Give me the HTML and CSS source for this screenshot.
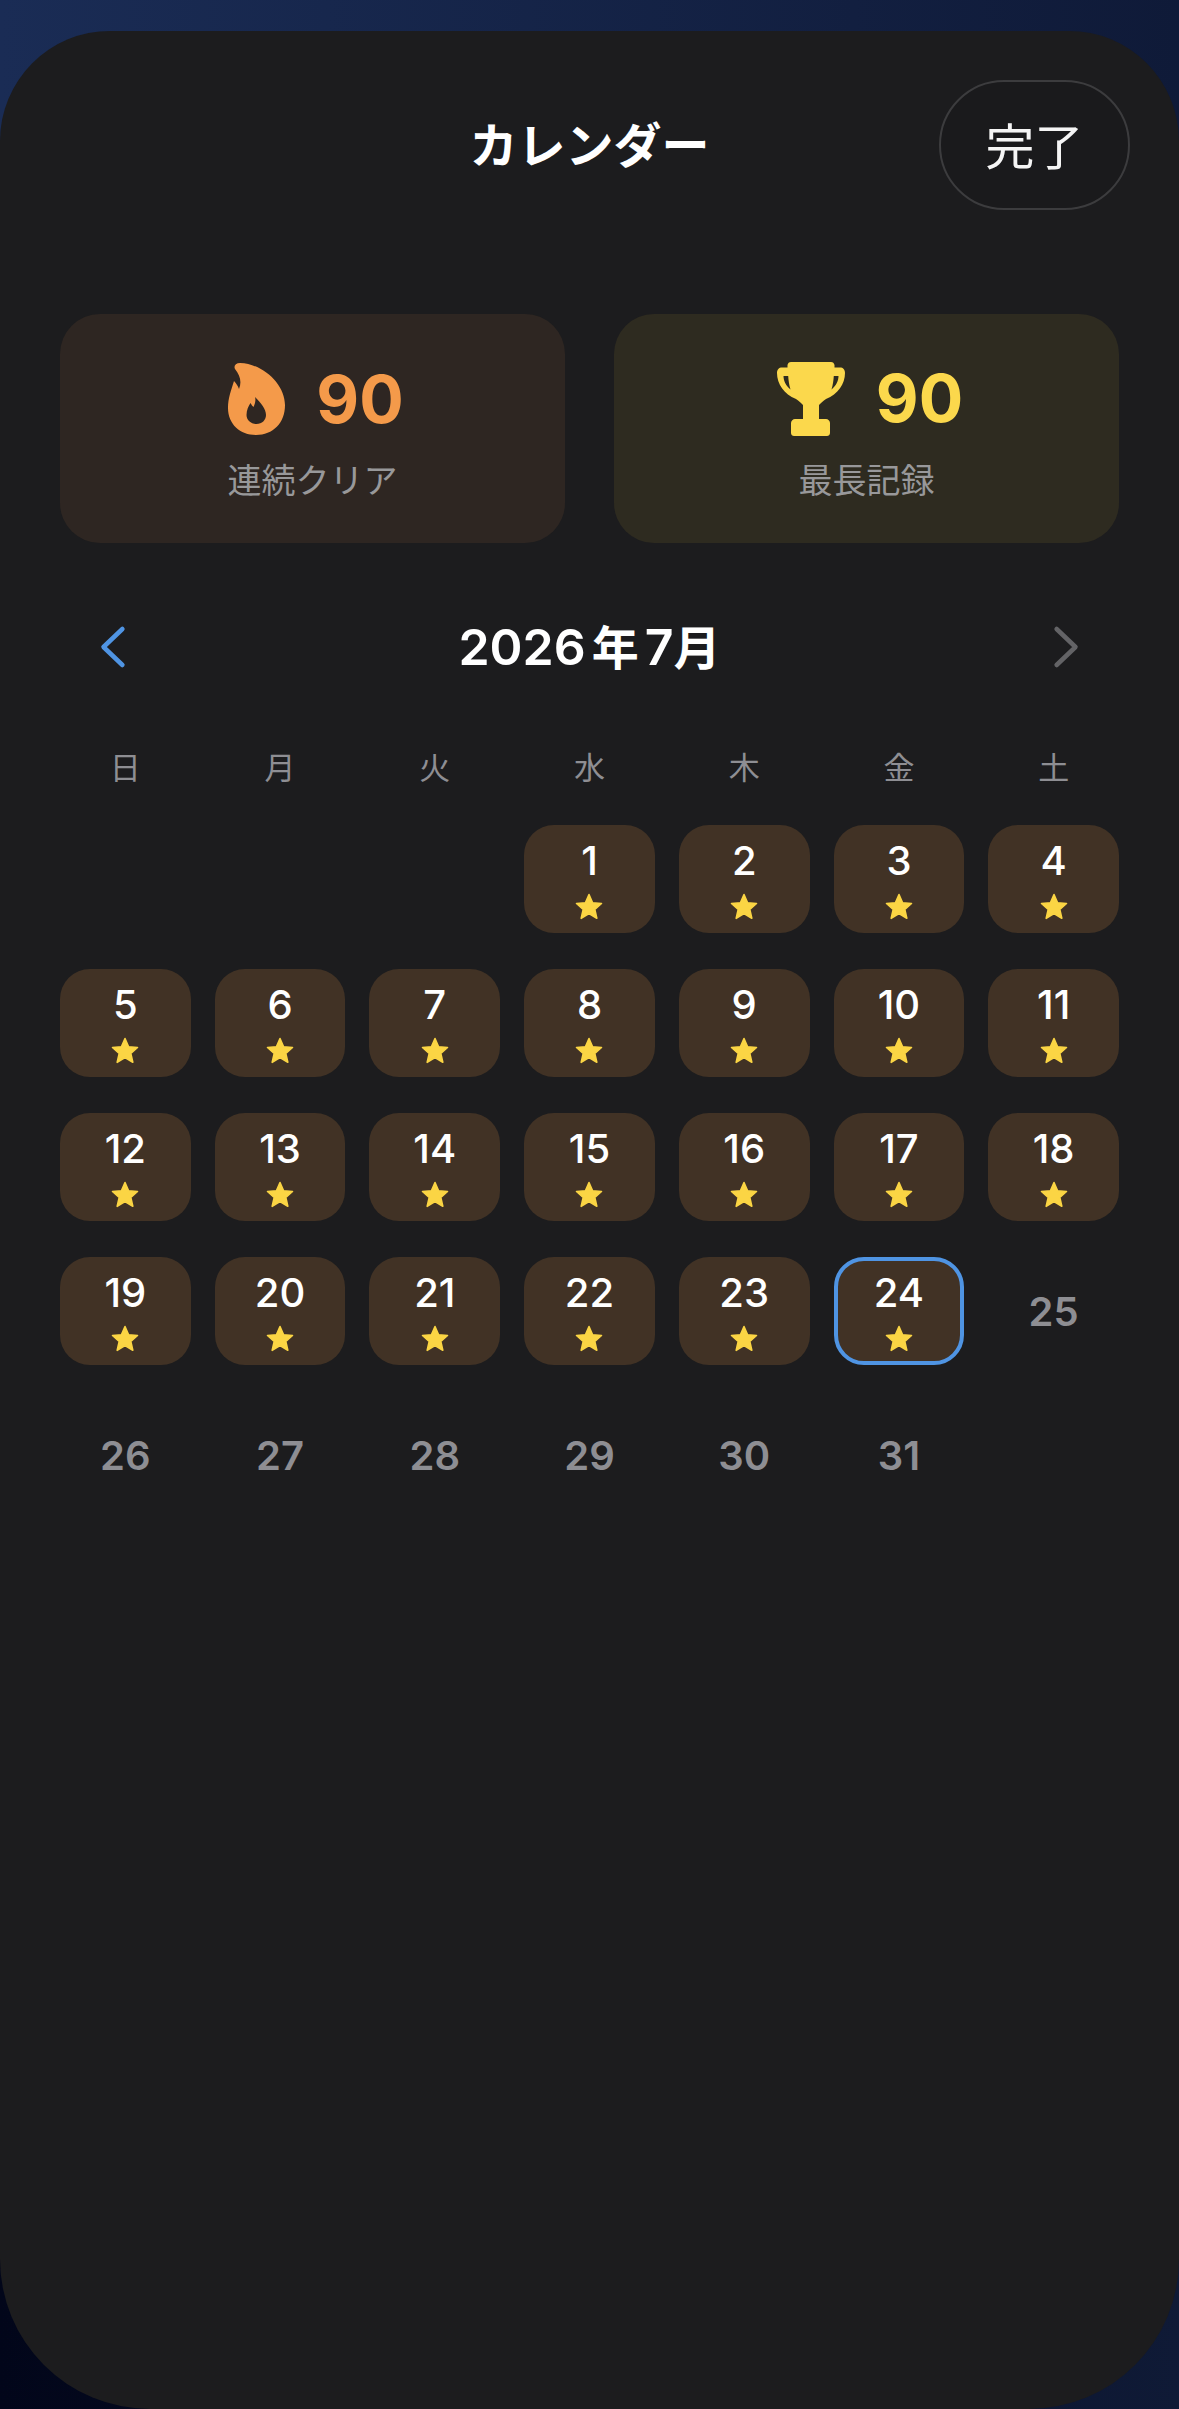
FILE: index.html
```html
<!DOCTYPE html>
<html lang="ja">
<head>
    <meta charset="UTF-8">
    <meta name="viewport" content="width=device-width, initial-scale=1.0">
    <title>カレンダー</title>
    <link rel="stylesheet" href="styles.css">
</head>
<body>
    <svg class="defs" width="0" height="0">
        <symbol id="star" viewBox="0 0 28 27">
            <polygon points="14,1.500 17.600,9.700 26.500,10.500 19.800,16.400 21.800,25.300 14,20.600 6.200,25.300 8.200,16.400 1.500,10.500 10.400,9.700" fill="#fbd544" stroke="#fbd544" stroke-width="1.600" stroke-linejoin="round"/>
        </symbol>
    </svg>

    <div class="sheet">
        <!-- HEADER -->
        <header class="header">
            <div></div>
            <h1 class="title">カレンダー</h1>
            <button class="done">完了</button>
        </header>

        <!-- STATS -->
        <section class="stats">
            <div class="stat stat-streak">
                <div class="stat-top">
                    <svg class="flame" viewBox="0 0 57 72">
                        <path fill-rule="evenodd" fill="#f49a4a" d="M7 6C5.5 3 7.5 0 12 0C36 1 57 22 57 42C57 60 45 72 28 72C12 72 0 61 0 45C0 35 3 28 6 18C8 20 10 23 11 26C14 19 12 12 7 6ZM27 34C33 40 38 46 38 52C38 57 34 61 28.5 61C23 61 18.5 57 18.5 52C18.5 47 20.5 43 22.5 40C23.5 42 24.5 43 25.5 44C27 41 28 37 27 34Z"/>
                    </svg>
                    <span class="stat-num">90</span>
                </div>
                <div class="stat-label">連続クリア</div>
            </div>
            <div class="stat stat-best">
                <div class="stat-top">
                    <svg class="trophy" viewBox="0 0 68 74">
                        <path fill-rule="evenodd" fill="#fbd84c" d="M14 0H54C56 0 57 1 57.5 3V5.5H63C66 5.5 68 7.5 68 11C68 22 61 32 49 37C46 39 44 41 42 43V57H49C51 57 53 59 53 61V71C53 73 51.5 74 50 74H17C15.500 74 14 73 14 71V61C14 59 16 57 18 57H26V43C24 41 22 39 19 37C7 32 0 22 0 11C0 7.5 2 5.5 5 5.500H10.500V3C11 1 12 0 14 0ZM6.500 14C6.500 19 9 24 13.500 27.500C12 23 11.500 18 11.200 14ZM61.500 14C61.500 19 59 24 54.500 27.500C56 23 56.500 18 56.800 14Z"/>
                    </svg>
                    <span class="stat-num">90</span>
                </div>
                <div class="stat-label">最長記録</div>
            </div>
        </section>

        <!-- MONTH NAV -->
        <nav class="month-nav">
            <svg class="chev chev-prev" viewBox="0 0 30 48"><polyline points="26,4 5,24 26,44"/></svg>
            <h2 class="month">2026<span class="kanji kanji-gap">年</span>7<span class="kanji">月</span></h2>
            <svg class="chev chev-next" viewBox="0 0 30 48"><polyline points="4,4 25,24 4,44"/></svg>
        </nav>

        <!-- WEEKDAYS -->
        <div class="weekdays">
            <div>日</div><div>月</div><div>火</div><div>水</div><div>木</div><div>金</div><div>土</div>
        </div>

        <!-- DAYS -->
        <div class="days">
            <div></div>
            <div></div>
            <div></div>
            <div class="day done-day"><span>1</span><svg class="star"><use href="#star"/></svg></div>
            <div class="day done-day"><span>2</span><svg class="star"><use href="#star"/></svg></div>
            <div class="day done-day"><span>3</span><svg class="star"><use href="#star"/></svg></div>
            <div class="day done-day"><span>4</span><svg class="star"><use href="#star"/></svg></div>
            <div class="day done-day"><span>5</span><svg class="star"><use href="#star"/></svg></div>
            <div class="day done-day"><span>6</span><svg class="star"><use href="#star"/></svg></div>
            <div class="day done-day"><span>7</span><svg class="star"><use href="#star"/></svg></div>
            <div class="day done-day"><span>8</span><svg class="star"><use href="#star"/></svg></div>
            <div class="day done-day"><span>9</span><svg class="star"><use href="#star"/></svg></div>
            <div class="day done-day"><span>10</span><svg class="star"><use href="#star"/></svg></div>
            <div class="day done-day"><span>11</span><svg class="star"><use href="#star"/></svg></div>
            <div class="day done-day"><span>12</span><svg class="star"><use href="#star"/></svg></div>
            <div class="day done-day"><span>13</span><svg class="star"><use href="#star"/></svg></div>
            <div class="day done-day"><span>14</span><svg class="star"><use href="#star"/></svg></div>
            <div class="day done-day"><span>15</span><svg class="star"><use href="#star"/></svg></div>
            <div class="day done-day"><span>16</span><svg class="star"><use href="#star"/></svg></div>
            <div class="day done-day"><span>17</span><svg class="star"><use href="#star"/></svg></div>
            <div class="day done-day"><span>18</span><svg class="star"><use href="#star"/></svg></div>
            <div class="day done-day"><span>19</span><svg class="star"><use href="#star"/></svg></div>
            <div class="day done-day"><span>20</span><svg class="star"><use href="#star"/></svg></div>
            <div class="day done-day"><span>21</span><svg class="star"><use href="#star"/></svg></div>
            <div class="day done-day"><span>22</span><svg class="star"><use href="#star"/></svg></div>
            <div class="day done-day"><span>23</span><svg class="star"><use href="#star"/></svg></div>
            <div class="day done-day today"><span>24</span><svg class="star"><use href="#star"/></svg></div>
            <div class="day">25</div>
            <div class="day">26</div>
            <div class="day">27</div>
            <div class="day">28</div>
            <div class="day">29</div>
            <div class="day">30</div>
            <div class="day">31</div>
        </div>
    </div>
</body>
</html>
```

FILE: styles.css
```css
html, body {
    margin: 0;
    height: 100%;
}
body {
    font-family: Inter, "Noto Sans CJK JP", sans-serif;
    color: #fff;
    background-color: #0f1a37;
    background-image: linear-gradient(to right, #1a2c55, #0f1a38), linear-gradient(to right, #02061a, #0f1a36);
    background-size: 100% 50%;
    background-position: top, bottom;
    background-repeat: no-repeat;
    overflow: hidden;
}
.defs {
    position: absolute;
}
.sheet {
    box-sizing: border-box;
    height: 2378px;
    margin-top: 31px;
    padding: 49px 60px 0;
    background-color: #1c1c1e;
    border-radius: 110px 110px 150px 150px;
}

.header {
    display: grid;
    grid-template-columns: 1fr auto 1fr;
    align-items: center;
}
.title {
    margin: 0 0 6px;
    font-size: 48px;
    font-weight: 700;
}
.done {
    justify-self: end;
    width: 191px;
    height: 130px;
    margin-right: -11px;
    border: 2px solid #3c3c3e;
    border-radius: 65px;
    background-color: #1a1a1c;
    color: #f5f5f5;
    font-family: inherit;
    font-size: 49px;
    padding: 0 0 4px;
}

.stats {
    display: grid;
    grid-template-columns: 1fr 1fr;
    gap: 49px;
    margin-top: 104px;
}
.stat {
    box-sizing: border-box;
    height: 229px;
    padding-top: 47px;
    border-radius: 40px;
    text-align: center;
}
.stat-streak {
    background-color: #2e2622;
    color: #f49a4a;
}
.stat-best {
    background-color: #2e2b20;
    color: #fbd84c;
}
.stat-top {
    display: flex;
    justify-content: center;
    align-items: center;
    gap: 31px;
    height: 76px;
    padding-left: 7px;
}
.flame {
    width: 57px;
    height: 72px;
}
.trophy {
    width: 68px;
    height: 74px;
}
.stat-num {
    font-size: 66px;
    font-weight: 700;
    line-height: 76px;
}
.stat-best .stat-num {
    margin-bottom: 3px;
}
.stat-label {
    margin-top: 24px;
    font-size: 34px;
    line-height: 40px;
    color: #98989a;
}

.month-nav {
    display: flex;
    justify-content: space-between;
    align-items: center;
    height: 60px;
    margin-top: 74px;
    padding: 0 39px;
}
.month {
    margin: 0 0 5px;
    font-size: 50px;
    font-weight: 600;
}
.kanji {
    font-size: 47px;
}
.kanji-gap {
    margin: 0 6px;
}
.chev {
    width: 27px;
    height: 44px;
    fill: none;
    stroke-width: 5;
    stroke-linecap: round;
    stroke-linejoin: round;
}
.chev-prev {
    stroke: #4f94e3;
}
.chev-next {
    stroke: #636366;
}

.weekdays,
.days {
    display: grid;
    grid-template-columns: repeat(7, 1fr);
    column-gap: 24px;
}
.weekdays {
    margin-top: 71px;
    font-size: 31px;
    line-height: 40px;
    text-align: center;
    color: #8e8e93;
}
.days {
    margin-top: 37px;
    row-gap: 36px;
    grid-auto-rows: 108px;
}
.day {
    box-sizing: border-box;
    display: flex;
    justify-content: center;
    align-items: center;
    font-size: 40px;
    font-weight: 600;
    color: #8e8e93;
}
.done-day {
    flex-direction: column;
    justify-content: flex-start;
    gap: 10px;
    padding-top: 14px;
    background-color: #413225;
    border-radius: 30px;
    font-weight: 500;
    color: #fff;
}
.done-day span {
    line-height: 44px;
}
.star {
    width: 28px;
    height: 27px;
}
.today {
    padding-top: 10px;
    border: 4px solid #4f94e3;
}
```
